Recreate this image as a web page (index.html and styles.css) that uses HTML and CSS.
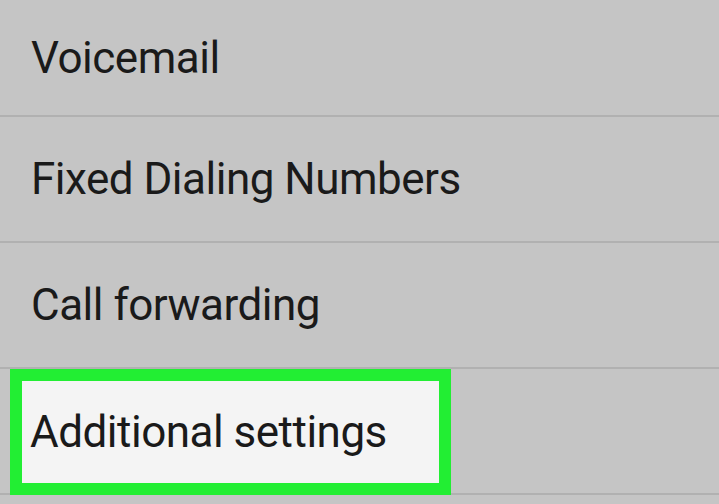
FILE: index.html
```html
<!DOCTYPE html>
<html>
<head>
<meta charset="utf-8">
<link rel="stylesheet" href="styles.css">
</head>
<body>
<ul class="menu">
  <li class="row first"><span class="label">Voicemail</span></li>
  <li class="row"><span class="label">Fixed Dialing Numbers</span></li>
  <li class="row"><span class="label">Call forwarding</span></li>
  <li class="row highlighted">
    <div class="hl-box"><span class="label">Additional settings</span></div>
  </li>
</ul>
</body>
</html>
```
FILE: styles.css
```css
html, body {
  margin: 0;
  padding: 0;
  background: #c5c5c5;
  width: 719px;
  height: 504px;
  overflow: hidden;
}
.menu {
  list-style: none;
  margin: 0;
  padding: 0;
  font-family: Roboto, "Liberation Sans", sans-serif;
  color: #1a1a1a;
}
.row {
  height: 124px;
  border-bottom: 2px solid #b1b1b1;
  display: flex;
  align-items: center;
  padding-left: 31px;
  box-sizing: content-box;
}
.row.first {
  height: 115px;
}
.label {
  font-size: 44px;
  line-height: 1;
  letter-spacing: -0.5px;
}
.row.highlighted {
  padding-left: 10px;
  align-items: flex-start;
}
.hl-box {
  width: 409px;
  height: 102px;
  border: 12px solid #22ee33;
  background: #f4f4f4;
  display: flex;
  align-items: center;
  padding-left: 8px;
  margin-bottom: -2px;
}
```
